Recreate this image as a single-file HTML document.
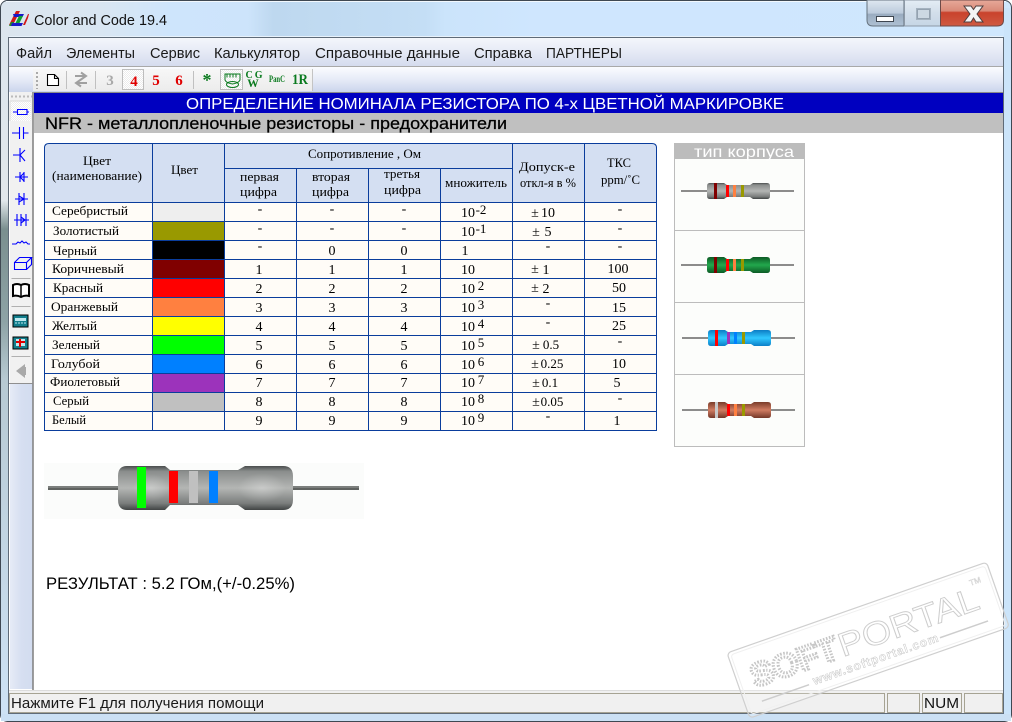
<!DOCTYPE html>
<html lang="ru"><head><meta charset="utf-8"><title>Color and Code 19.4</title>
<style>
html,body{margin:0;padding:0;background:#fff;overflow:hidden}
svg{display:block}
.s{font-family:"Liberation Sans",sans-serif}
.t{font-family:"Liberation Serif",serif;font-size:13px;fill:#000}
.m{font-family:"Liberation Sans",sans-serif;font-size:15px;fill:#1a1a1a}
.c text{text-anchor:middle}
</style></head><body>
<svg width="1012" height="722" viewBox="0 0 1012 722" xmlns="http://www.w3.org/2000/svg">
<defs>
<linearGradient id="glass" gradientUnits="userSpaceOnUse" x1="0" y1="0" x2="1012" y2="0"><stop offset="0" stop-color="#dbe5ee"/><stop offset=".1" stop-color="#d9e6f2"/><stop offset=".17" stop-color="#cee5fc"/><stop offset=".245" stop-color="#cde4fb"/><stop offset=".27" stop-color="#bed8ef"/><stop offset=".42" stop-color="#c4def5"/><stop offset=".44" stop-color="#cbe4fb"/><stop offset=".53" stop-color="#cfe6fe"/><stop offset="1" stop-color="#cfe7fd"/></linearGradient>
<linearGradient id="menu" x1="0" y1="0" x2="0" y2="1"><stop offset="0" stop-color="#f4f6fb"/><stop offset=".45" stop-color="#e7ebf6"/><stop offset="1" stop-color="#d5dcee"/></linearGradient>
<linearGradient id="tb" x1="0" y1="0" x2="0" y2="1"><stop offset="0" stop-color="#fbfcff"/><stop offset=".5" stop-color="#e6ebf7"/><stop offset="1" stop-color="#cbd5ec"/></linearGradient>
<linearGradient id="tbg" x1="0" y1="0" x2="0" y2="1"><stop offset="0" stop-color="#f7f7f7"/><stop offset="1" stop-color="#ececec"/></linearGradient>
<linearGradient id="left" x1="0" y1="0" x2="1" y2="0"><stop offset="0" stop-color="#e6ebf6"/><stop offset=".5" stop-color="#d6dff1"/><stop offset="1" stop-color="#d2dcef"/></linearGradient>
<linearGradient id="bgrad" x1="0" y1="0" x2="0" y2="1"><stop offset="0" stop-color="#4a4d4d"/><stop offset=".12" stop-color="#8a8d8c"/><stop offset=".5" stop-color="#b4b6b4"/><stop offset=".85" stop-color="#7a7d7c"/><stop offset="1" stop-color="#414444"/></linearGradient>
<linearGradient id="bgreen" x1="0" y1="0" x2="0" y2="1"><stop offset="0" stop-color="#0d5a24"/><stop offset=".5" stop-color="#22a84c"/><stop offset="1" stop-color="#0d5c26"/></linearGradient>
<linearGradient id="bblue" x1="0" y1="0" x2="0" y2="1"><stop offset="0" stop-color="#0c7cc4"/><stop offset=".5" stop-color="#30c8ff"/><stop offset="1" stop-color="#0c80c8"/></linearGradient>
<linearGradient id="bbrown" x1="0" y1="0" x2="0" y2="1"><stop offset="0" stop-color="#7a3c2a"/><stop offset=".5" stop-color="#d07c62"/><stop offset="1" stop-color="#743828"/></linearGradient>
<linearGradient id="minb" x1="0" y1="0" x2="0" y2="1"><stop offset="0" stop-color="#dfe8f1"/><stop offset=".5" stop-color="#bccbdc"/><stop offset=".55" stop-color="#9aacc0"/><stop offset="1" stop-color="#afc1d3"/></linearGradient>
<linearGradient id="maxb" x1="0" y1="0" x2="0" y2="1"><stop offset="0" stop-color="#e4edf5"/><stop offset=".5" stop-color="#d2deea"/><stop offset="1" stop-color="#c6d6e5"/></linearGradient>
<linearGradient id="clob" x1="0" y1="0" x2="0" y2="1"><stop offset="0" stop-color="#e7a99a"/><stop offset=".42" stop-color="#d98a78"/><stop offset=".48" stop-color="#c9422c"/><stop offset="1" stop-color="#cf5a42"/></linearGradient>
<linearGradient id="edge" x1="0" y1="0" x2="0" y2="1"><stop offset="0" stop-color="#dbe5ee"/><stop offset=".27" stop-color="#e2e8ec"/><stop offset=".31" stop-color="#7a8f8f"/><stop offset=".44" stop-color="#8ea3a6"/><stop offset=".52" stop-color="#b7c9d2"/><stop offset="1" stop-color="#cfe3f5"/></linearGradient>
<radialGradient id="hl"><stop offset="0" stop-color="#fff" stop-opacity=".28"/><stop offset="1" stop-color="#fff" stop-opacity="0"/></radialGradient>
<pattern id="dith" width="2" height="2" patternUnits="userSpaceOnUse"><rect width="2" height="2" fill="#fff"/><rect width="1" height="1" fill="#ececec"/><rect x="1" y="1" width="1" height="1" fill="#ececec"/></pattern>
</defs>

<!-- window frame -->
<rect width="1012" height="722" fill="#fff"/>
<rect x=".5" y=".5" width="1011" height="721" rx="7" fill="url(#glass)" stroke="#3f4852"/>
<path d="M6 1.500H1006" stroke="#f2f8fd"/>
<rect x="1" y="8" width="8" height="713" fill="url(#edge)"/>
<rect x="1004" y="8" width="7" height="706" fill="#cbe4fa"/>
<rect x="1" y="714" width="1010" height="7" fill="#cbe0f4"/>
<path d="M9 36.500H1003" stroke="#e8f2fb"/>
<!-- logo -->
<g>
<path d="M9 25L16 11h4l-7 14z" fill="#d01818"/>
<path d="M13 14h11l-1.500 3H14z" fill="#1818c8"/>
<path d="M14 26l5-10h4l-5 10z" fill="#10a030"/>
<path d="M11 22h3l-1.500 4H9z" fill="#1f8a2c"/>
<path d="M12 23h11l-1.500 3H11z" fill="#1818c8"/>
<path d="M23 25l5-11h1l-1 4-3 7z" fill="#d01818"/>
</g>
<text x="34" y="25" class="s" font-size="15" fill="#111" textLength="133" lengthAdjust="spacingAndGlyphs">Color and Code 19.4</text>
<!-- caption buttons -->
<path d="M867 0H904V26H873Q867 26 867 20Z" fill="url(#minb)" stroke="#66737f"/>
<rect x="904.500" y="0" width="36" height="26" fill="url(#maxb)" stroke="#8d99a6"/>
<path d="M940.500 0H1003.500V20Q1003.500 26 997 26H940.500Z" fill="url(#clob)" stroke="#6d4a48"/>
<rect x="876.500" y="16.500" width="17" height="5" fill="#fff" stroke="#3e4650"/>
<rect x="917.500" y="9.500" width="12" height="9" fill="none" stroke="#a4b2bf" stroke-width="3"/>
<rect x="917.500" y="9.500" width="12" height="9" fill="#ccd8e3" stroke="#94a2b0"/>
<path d="M964 6h7l2.500 3.500L976 6h7l-6 8 6 8h-7l-2.500-4-2.500 4h-7l6-8z" fill="#f4f4f4" stroke="#4f3f3f"/>

<!-- client -->
<rect x="8.500" y="37.500" width="995" height="676" fill="#fff" stroke="#5f6b78"/>
<rect x="9" y="38" width="994" height="28" fill="url(#menu)"/>
<rect x="9" y="66" width="994" height="1" fill="#a9a9a9"/>
<rect x="9" y="67" width="994" height="25" fill="url(#tb)"/>
<g class="m">
<text x="16" y="58" textLength="36" lengthAdjust="spacingAndGlyphs">Файл</text>
<text x="66" y="58" textLength="69" lengthAdjust="spacingAndGlyphs">Элементы</text>
<text x="150" y="58" textLength="50" lengthAdjust="spacingAndGlyphs">Сервис</text>
<text x="214" y="58" textLength="86" lengthAdjust="spacingAndGlyphs">Калькулятор</text>
<text x="315" y="58" textLength="145" lengthAdjust="spacingAndGlyphs">Справочные данные</text>
<text x="474" y="58" textLength="58" lengthAdjust="spacingAndGlyphs">Справка</text>
<text x="546" y="58" textLength="76" lengthAdjust="spacingAndGlyphs">ПАРТНЕРЫ</text>
</g>

<!-- top toolbar -->
<rect x="33" y="69" width="280" height="22" fill="url(#tbg)"/>
<path d="M312.500 69V91" stroke="#c4c4c4"/>
<path d="M37 72v17" stroke="#aaa" stroke-width="2" stroke-dasharray="2 2"/>
<path d="M47.500 74.500h7l4 4v7h-11zM54.500 74.500v4h4" fill="#fff" stroke="#000" stroke-width="1.100"/>
<path d="M66.500 71v18M95.500 71v18M193.500 71v18" stroke="#c0c0c0"/>
<path d="M75 76h10M81 72.500l5 3.500-5 3.500M87 83H77M81 79.500l-5 3.500 5 3.500" fill="none" stroke="#a0a0a0" stroke-width="2"/>
<rect x="122.500" y="69.500" width="21" height="20" fill="url(#dith)" stroke="#bdbdbd"/>
<rect x="220.500" y="69.500" width="22" height="20" fill="url(#dith)" stroke="#bdbdbd"/>
<g font-family="Liberation Serif,serif" font-weight="bold" font-size="15" text-anchor="middle">
<text x="110" y="85" fill="#a8a8a8">3</text>
<text x="134" y="86" fill="#e00000">4</text>
<text x="156" y="85" fill="#e00000">5</text>
<text x="179" y="85" fill="#e00000">6</text>
<text x="207" y="86" fill="#0a7a1e" font-size="18">*</text>
<text x="254" y="78" fill="#0a7a1e" font-size="10" textLength="17" lengthAdjust="spacing">C G</text>
<text x="253" y="87" fill="#0a7a1e" font-size="11.500">W</text>
<text x="277" y="82" fill="#0a7a1e" font-size="9" textLength="16" lengthAdjust="spacingAndGlyphs">PanC</text>
<text x="300" y="84" fill="#0a7a1e" font-size="15" textLength="16" lengthAdjust="spacingAndGlyphs">1R</text>
</g>
<path d="M225 74h15v6q-1 3-7.500 4-6.500-1-7.500-4z" fill="none" stroke="#0a7a1e"/>
<ellipse cx="232.500" cy="84.500" rx="6" ry="3" fill="none" stroke="#0a7a1e"/>
<path d="M226.500 75.500h12" stroke="#0a7a1e" stroke-width="4" stroke-dasharray="1 2"/>

<!-- left toolbar -->
<rect x="9" y="92" width="25" height="621" fill="#fff"/>
<rect x="10" y="92" width="23" height="292" fill="#f1f1f1"/>
<rect x="10" y="384" width="23" height="305" fill="url(#left)"/>
<path d="M33 92V690" stroke="#7f7f7f" stroke-width="1.500"/>
<path d="M11 96.500h21" stroke="#bbb" stroke-width="2" stroke-dasharray="2 2"/>
<rect x="10" y="101" width="21" height="20" fill="url(#dith)"/>
<path d="M10 121V101H31" fill="none" stroke="#dcdcdc"/>
<g fill="none" stroke="#0000ff" stroke-width="1.100">
<path d="M13 112h4.500M27 112h2M17.500 109.500h9.500v5h-9.500z"/>
<path d="M12 133h7M19.500 127v12M23.500 127v12M23.500 133h5"/>
<path d="M13 155h7M20 148v14M20 155l5-5M20 155l5 6"/>
<path d="M15 177h13M20 172v10M24 172v10M24 173l-4 4 4 4"/>
<path d="M15 199h13M19 193v12M24 193v12M19 196l5 3-5 3"/>
<path d="M14 220h15M17 214v12M21 214v12M26 214v12M21 217l4 3-4 3"/>
<path d="M12 244h4l2-2 2 1 2-2 2 2 2-1 2 2h2"/>
<path d="M14.500 262.500h12v7h-12zM14.500 262.500l5-5h12l-5 5M26.500 269.500l5-5v-7"/>
</g>
<path d="M11.500 278.500h19M11.500 306.500h19M11.500 356.500h19" stroke="#b0b0b0"/>
<path d="M13 285q4-2 8 0 4-2 8 0v11q-4-1-8 1-4-2-8-1z" fill="#fff" stroke="#000" stroke-width="2"/>
<path d="M21 285v11" stroke="#000" stroke-width="1.500"/>
<rect x="13" y="315" width="15" height="12" fill="#127e8c" stroke="#000"/>
<rect x="15" y="318" width="11" height="3" fill="#bfe8ef"/>
<path d="M15 323h11" stroke="#bfe8ef" stroke-dasharray="2 1"/>
<rect x="13" y="337" width="15" height="12" fill="#127e8c" stroke="#000"/>
<rect x="16" y="339" width="9" height="7" fill="#bfe8ef"/>
<path d="M16 342h9M20 339v8" stroke="#e00000" stroke-width="2"/>
<path d="M16 371l9-7v14z" fill="#a9a9a9"/><rect x="23" y="367" width="3" height="8" fill="#a9a9a9"/>
<path d="M9 383.500h24" stroke="#8f8f8f"/>

<!-- headings -->
<rect x="34" y="93" width="969" height="20" fill="#0000c0"/>
<path d="M34 92.500h969" stroke="#8a8a8a"/>
<rect x="34" y="113" width="969" height="20" fill="#c0c0c0"/>
<text x="186" y="109" class="s" font-size="16" fill="#fff" textLength="598" lengthAdjust="spacingAndGlyphs">ОПРЕДЕЛЕНИЕ НОМИНАЛА РЕЗИСТОРА ПО 4-х ЦВЕТНОЙ МАРКИРОВКЕ</text>
<text x="45" y="129" class="s" font-size="17" fill="#000" stroke="#000" stroke-width=".25" textLength="462" lengthAdjust="spacingAndGlyphs">NFR - металлопленочные резисторы - предохранители</text>

<!-- table -->
<path d="M48 143H653Q657 143 657 147V202H44V147Q44 143 48 143Z" fill="#d4dff2"/>
<rect x="44" y="202" width="613" height="229" fill="#fffcf7"/>
<g shape-rendering="crispEdges">
<rect x="153" y="203" width="71" height="18" fill="#eeeeee"/>
<rect x="153" y="222" width="71" height="18" fill="#999900"/>
<rect x="153" y="241" width="71" height="18" fill="#000000"/>
<rect x="153" y="260" width="71" height="18" fill="#800000"/>
<rect x="153" y="279" width="71" height="18" fill="#ff0000"/>
<rect x="153" y="298" width="71" height="18" fill="#ff8040"/>
<rect x="153" y="317" width="71" height="18" fill="#ffff00"/>
<rect x="153" y="336" width="71" height="18" fill="#00ff00"/>
<rect x="153" y="355" width="71" height="18" fill="#0080ff"/>
<rect x="153" y="374" width="71" height="18" fill="#9c33bb"/>
<rect x="153" y="393" width="71" height="18" fill="#c0c0c0"/>
<path d="M44.500 202.500H657M44.500 221.500H657M44.500 240.500H657M44.500 259.500H657M44.500 278.500H657M44.500 297.500H657M44.500 316.500H657M44.500 335.500H657M44.500 354.500H657M44.500 373.500H657M44.500 392.500H657M44.500 411.500H657M44.500 430.500H657M224 168.500H512M44.500 147V431M152.500 143V431M224.500 143V431M512.500 143V431M584.500 143V431M656.500 147V431M296.500 168V431M368.500 168V431M440.500 168V431" fill="none" stroke="#0a3d9c"/>
</g>
<path d="M44.500 148Q44.500 143.500 49 143.500H652Q656.500 143.500 656.500 148" fill="none" stroke="#0a3d9c"/>
<g class="t">
<text x="83" y="165" textLength="28" lengthAdjust="spacingAndGlyphs">Цвет</text>
<text x="52" y="180" textLength="90" lengthAdjust="spacingAndGlyphs">(наименование)</text>
<text x="171" y="174" textLength="27" lengthAdjust="spacingAndGlyphs">Цвет</text>
<text x="308" y="158" textLength="113" lengthAdjust="spacingAndGlyphs">Сопротивление , Ом</text>
<text x="240" y="181" textLength="39" lengthAdjust="spacingAndGlyphs">первая</text>
<text x="240" y="196" textLength="37" lengthAdjust="spacingAndGlyphs">цифра</text>
<text x="312" y="181" textLength="38" lengthAdjust="spacingAndGlyphs">вторая</text>
<text x="312" y="196" textLength="37" lengthAdjust="spacingAndGlyphs">цифра</text>
<text x="384" y="178" textLength="36" lengthAdjust="spacingAndGlyphs">третья</text>
<text x="384" y="194" textLength="37" lengthAdjust="spacingAndGlyphs">цифра</text>
<text x="445" y="187" textLength="62" lengthAdjust="spacingAndGlyphs">множитель</text>
<text x="519" y="171" textLength="56" lengthAdjust="spacingAndGlyphs">Допуск-е</text>
<text x="520" y="187" textLength="56" lengthAdjust="spacingAndGlyphs">откл-я в %</text>
<text x="607" y="167" textLength="24" lengthAdjust="spacingAndGlyphs">ТКС</text>
<text x="601" y="184" textLength="39" lengthAdjust="spacingAndGlyphs">ppm/˚C</text>

<text x="52" y="215" textLength="76" lengthAdjust="spacingAndGlyphs">Серебристый</text>
<text x="53" y="235" textLength="66" lengthAdjust="spacingAndGlyphs">Золотистый</text>
<text x="53" y="255" textLength="44" lengthAdjust="spacingAndGlyphs">Черный</text>
<text x="52" y="273" textLength="72" lengthAdjust="spacingAndGlyphs">Коричневый</text>
<text x="53" y="292" textLength="50" lengthAdjust="spacingAndGlyphs">Красный</text>
<text x="51" y="311" textLength="67" lengthAdjust="spacingAndGlyphs">Оранжевый</text>
<text x="52" y="330" textLength="45" lengthAdjust="spacingAndGlyphs">Желтый</text>
<text x="52" y="349" textLength="48" lengthAdjust="spacingAndGlyphs">Зеленый</text>
<text x="51" y="368" textLength="49" lengthAdjust="spacingAndGlyphs">Голубой</text>
<text x="50" y="386" textLength="70" lengthAdjust="spacingAndGlyphs">Фиолетовый</text>
<text x="53" y="405" textLength="36" lengthAdjust="spacingAndGlyphs">Серый</text>
<text x="52" y="424" textLength="34" lengthAdjust="spacingAndGlyphs">Белый</text>
</g>
<g class="t c" style="font-size:14px">
<text x="260" y="213">-</text><text x="332" y="213">-</text><text x="404" y="213">-</text>
<text x="260" y="232">-</text><text x="332" y="232">-</text><text x="404" y="232">-</text>
<text x="260" y="250">-</text><text x="332" y="255">0</text><text x="404" y="255">0</text>
<text x="259" y="274">1</text><text x="332" y="274">1</text><text x="404" y="274">1</text>
<text x="259" y="293">2</text><text x="332" y="293">2</text><text x="404" y="293">2</text>
<text x="259" y="312">3</text><text x="332" y="312">3</text><text x="404" y="312">3</text>
<text x="259" y="331">4</text><text x="332" y="331">4</text><text x="404" y="331">4</text>
<text x="259" y="350">5</text><text x="332" y="350">5</text><text x="404" y="350">5</text>
<text x="259" y="369">6</text><text x="332" y="369">6</text><text x="404" y="369">6</text>
<text x="259" y="387">7</text><text x="332" y="387">7</text><text x="404" y="387">7</text>
<text x="259" y="406">8</text><text x="332" y="406">8</text><text x="404" y="406">8</text>
<text x="259" y="425">9</text><text x="332" y="425">9</text><text x="404" y="425">9</text>

<text x="468" y="217">10</text><text x="481" y="214" style="font-size:13px">-2</text>
<text x="468" y="236">10</text><text x="481" y="233" style="font-size:13px">-1</text>
<text x="465" y="255">1</text>
<text x="468" y="274">10</text>
<text x="468" y="293">10</text><text x="481" y="290" style="font-size:13px">2</text>
<text x="468" y="312">10</text><text x="481" y="309" style="font-size:13px">3</text>
<text x="468" y="331">10</text><text x="481" y="328" style="font-size:13px">4</text>
<text x="468" y="350">10</text><text x="481" y="347" style="font-size:13px">5</text>
<text x="468" y="369">10</text><text x="481" y="366" style="font-size:13px">6</text>
<text x="468" y="387">10</text><text x="481" y="384" style="font-size:13px">7</text>
<text x="468" y="406">10</text><text x="481" y="403" style="font-size:13px">8</text>
<text x="468" y="425">10</text><text x="481" y="422" style="font-size:13px">9</text>

<text x="535" y="217">±</text><text x="548" y="217">10</text>
<text x="536" y="236">±</text><text x="548" y="236">5</text>
<text x="548" y="250">-</text>
<text x="535" y="273">±</text><text x="546" y="274">1</text>
<text x="535" y="292">±</text><text x="546" y="293">2</text>
<text x="548" y="307">-</text>
<text x="548" y="326">-</text>
<text x="536" y="349">±</text><text x="551" y="349" style="font-size:13px">0.5</text>
<text x="535" y="368">±</text><text x="552" y="368" style="font-size:13px">0.25</text>
<text x="536" y="387">±</text><text x="550" y="387" style="font-size:13px">0.1</text>
<text x="536" y="406">±</text><text x="552" y="406" style="font-size:13px">0.05</text>
<text x="548" y="420">-</text>

<text x="620" y="213">-</text><text x="620" y="232">-</text><text x="620" y="250">-</text>
<text x="618" y="273">100</text><text x="619" y="292">50</text><text x="619" y="312">15</text><text x="619" y="330">25</text>
<text x="620" y="345">-</text><text x="619" y="368">10</text><text x="617" y="387">5</text>
<text x="620" y="402">-</text><text x="617" y="425">1</text>
</g>

<!-- case type panel -->
<rect x="674.500" y="158.500" width="130" height="288" fill="#fcfdfb" stroke="#bcbcbc"/>
<rect x="674" y="143" width="131" height="16" fill="#bcbcbc"/>
<text x="694" y="157" class="s" font-size="16" fill="#fff" textLength="100" lengthAdjust="spacingAndGlyphs">тип корпуса</text>
<path d="M675 230.500h130M675 302.500h130M675 374.500h130" stroke="#bcbcbc"/>

<g transform="translate(681,183)">
<path d="M0 8H113" stroke="#666" stroke-width="1.600"/>
<path d="M29 0H43L46 2H69L72 0H86Q89 0 89 3V13Q89 16 86 16H72L69 14H46L43 16H29Q26 16 26 13V3Q26 0 29 0Z" fill="url(#bgrad)"/>
<rect x="33" y="0" width="3" height="16" fill="#800000"/><rect x="45" y="2" width="3" height="12" fill="#f00"/><rect x="52" y="2" width="3" height="12" fill="#ff8040"/><rect x="60" y="2" width="3" height="12" fill="#999900"/>
</g>
<g transform="translate(681,257)">
<path d="M0 8H113" stroke="#666" stroke-width="1.600"/>
<path d="M29 0H43L46 2H69L72 0H86Q89 0 89 3V13Q89 16 86 16H72L69 14H46L43 16H29Q26 16 26 13V3Q26 0 29 0Z" fill="url(#bgreen)"/>
<rect x="33" y="0" width="3" height="16" fill="#800000"/><rect x="45" y="2" width="3" height="12" fill="#f00"/><rect x="52" y="2" width="3" height="12" fill="#ff8040"/><rect x="60" y="2" width="3" height="12" fill="#999900"/>
</g>
<g transform="translate(682,330)">
<path d="M0 8H113" stroke="#666" stroke-width="1.600"/>
<path d="M29 0H43L46 2H69L72 0H86Q89 0 89 3V13Q89 16 86 16H72L69 14H46L43 16H29Q26 16 26 13V3Q26 0 29 0Z" fill="url(#bblue)"/>
<rect x="33" y="0" width="3" height="16" fill="#f00"/><rect x="45" y="2" width="3" height="12" fill="#9c33bb"/><rect x="52" y="2" width="3" height="12" fill="#0080ff"/><rect x="60" y="2" width="3" height="12" fill="#999900"/>
</g>
<g transform="translate(682,402)">
<path d="M0 8H113" stroke="#666" stroke-width="1.600"/>
<path d="M29 0H43L46 2H69L72 0H86Q89 0 89 3V13Q89 16 86 16H72L69 14H46L43 16H29Q26 16 26 13V3Q26 0 29 0Z" fill="url(#bbrown)"/>
<rect x="33" y="0" width="3" height="16" fill="#c8c8c8"/><rect x="45" y="2" width="3" height="12" fill="#f00"/><rect x="52" y="2" width="3" height="12" fill="#ff8040"/><rect x="60" y="2" width="3" height="12" fill="#999900"/>
</g>

<!-- large resistor -->
<rect x="44" y="463" width="320" height="56" fill="#fbfcfb"/>
<path d="M48 488H359" stroke="#5f6260" stroke-width="4"/>
<path d="M48 487H359" stroke="#9a9c9a" stroke-width="1"/>
<path d="M127 466H165L170 470H238L245 466H283Q293 466 293 476V500Q293 510 283 510H245L238 505H170L165 510H127Q118 510 118 500V476Q118 466 127 466Z" fill="url(#bgrad)"/>
<ellipse cx="151" cy="488" rx="18" ry="14" fill="url(#hl)"/><ellipse cx="262" cy="488" rx="24" ry="15" fill="url(#hl)"/>
<rect x="137" y="467" width="9" height="41" fill="#00ff00"/>
<rect x="169" y="471" width="9" height="32" fill="#ff0000"/>
<rect x="189" y="471" width="9" height="32" fill="#c0c0c0"/>
<rect x="209" y="471" width="9" height="32" fill="#0080ff"/>

<text x="46" y="589" class="s" font-size="17" fill="#000" textLength="249" lengthAdjust="spacingAndGlyphs">РЕЗУЛЬТАТ : 5.2 ГОм,(+/-0.25%)</text>

<!-- status bar -->
<rect x="9" y="691" width="994" height="22" fill="#f0f0f0"/>
<path d="M9 690.500h994" stroke="#dcdcdc"/>
<g fill="none" stroke="#a6a393" shape-rendering="crispEdges">
<rect x="9.500" y="693.500" width="875" height="19"/>
<rect x="887.500" y="693.500" width="32" height="19"/>
<rect x="922.500" y="693.500" width="39" height="19"/>
<rect x="964.500" y="693.500" width="38" height="19"/>
</g>
<text x="11" y="708" class="s" font-size="15" fill="#1a1a1a" textLength="253" lengthAdjust="spacingAndGlyphs">Нажмите F1 для получения помощи</text>
<text x="924" y="708" class="s" font-size="15" fill="#111" textLength="35" lengthAdjust="spacingAndGlyphs">NUM</text>

<!-- watermark -->
<g transform="translate(727,653) rotate(-19.300)">
<rect x="0" y="0" width="275" height="69" rx="4" fill="#fff" fill-opacity=".2" stroke="#cfcfcf" stroke-width="1.200"/>
<rect x="3" y="3" width="269" height="63" rx="3" fill="none" stroke="#f0f0f0"/>
<text x="15" y="42" class="s" font-size="33" font-weight="bold" fill="none" stroke="#c6c6c6" stroke-width="3" stroke-dasharray="1.500 1.500" textLength="91" lengthAdjust="spacingAndGlyphs">SOFT</text>
<text x="108" y="42" class="s" font-size="33" fill="#fff" stroke="#cdcdcd" stroke-width=".9" textLength="147" lengthAdjust="spacingAndGlyphs">PORTAL</text>
<text x="252" y="17" class="s" font-size="8" fill="#fff" stroke="#cacaca" stroke-width=".4">TM</text>
<text x="72" y="59" class="s" font-size="12" font-weight="bold" fill="#fff" stroke="#c6c6c6" stroke-width=".5" textLength="132" lengthAdjust="spacing">www.softportal.com</text>
<path d="M17 57H67M206 56H257" stroke="#cdcdcd" stroke-width="1.500"/>
</g>
</svg>
</body></html>
